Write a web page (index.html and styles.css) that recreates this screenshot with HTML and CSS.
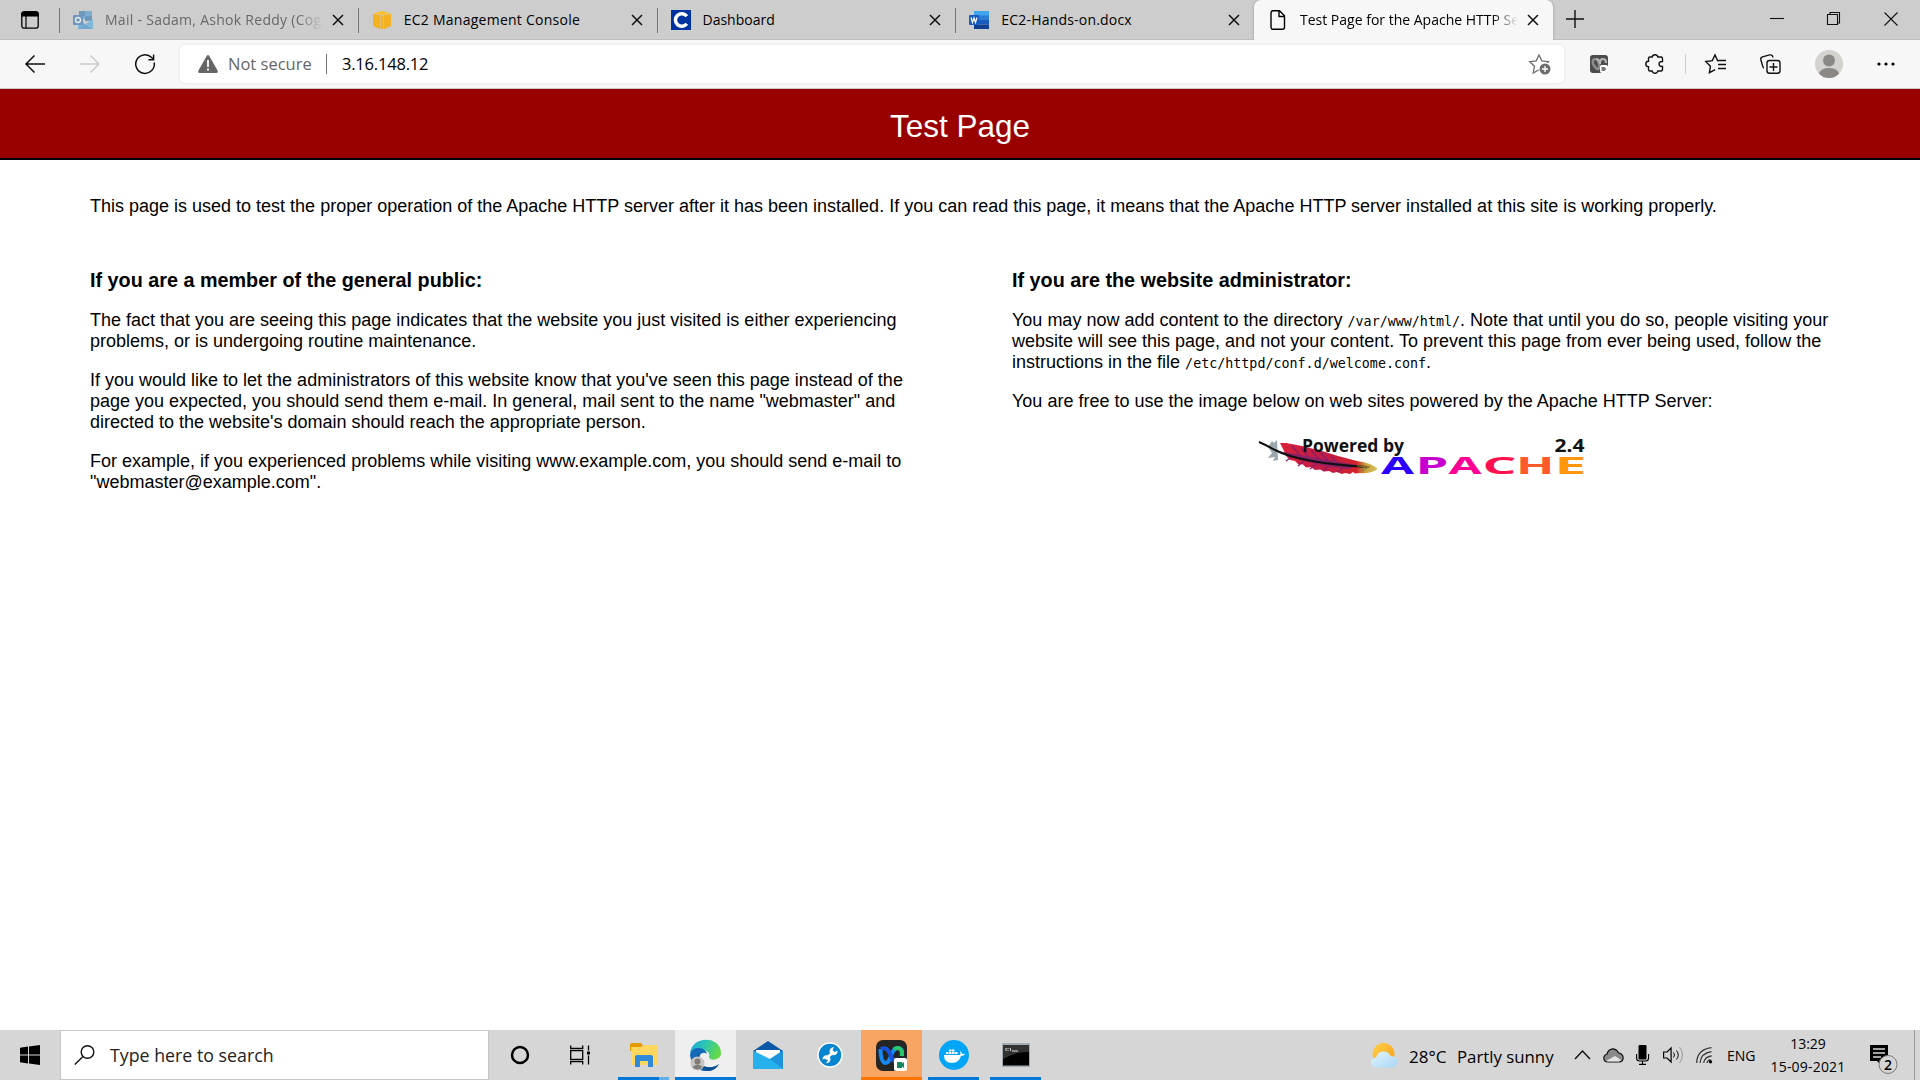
FILE: index.html
```
<!DOCTYPE html>
<html lang="en">
<head>
<meta charset="utf-8">
<title>Test Page for the Apache HTTP Server</title>
<link rel="stylesheet" href="styles.css">
</head>
<body>
<div class="screen">
  <div class="tabstrip">
    <div class="tab-actions">
      <svg width="18" height="18" viewBox="0 0 18 18"><rect x=".8" y=".8" width="16.4" height="16.4" rx="2.5" fill="none" stroke="#000" stroke-width="1.3"/><path d="M.8 5V3Q.8.8 3 .8h12Q17.2.8 17.2 3v2zM5 5v12" stroke="#000" stroke-width="1.2"/></svg>
    </div>
    <div class="tab">
      <svg class="dim" width="20" height="18" viewBox="0 0 20 18"><path d="M6 0h13v8H6z" fill="#2b8fd9"/><path d="M6 0h6v5H6zM12 5h7v5h-7z" fill="#1267ad"/><path d="M5 9l7.5 4L20 8v10H5z" fill="#35a7e8"/><path d="M11 13l9 5H5z" fill="#1b83cf"/><rect y="4" width="10" height="10" rx="1" fill="#0f62b3"/><circle cx="5" cy="9" r="2.5" fill="none" stroke="#fff" stroke-width="1.5"/></svg>
      <span class="tab-title muted t-mail">Mail - Sadam, Ashok Reddy (Cog</span>
      <svg class="x" width="12" height="12" viewBox="0 0 12 12"><path d="M1 1l10 10M11 1L1 11"/></svg>
    </div>
    <div class="tab">
      <svg width="20" height="18" viewBox="0 0 20 18"><path d="M1 3l7 1v14l-7-3zM12 4l7-1v12l-7 3zM8.500 4.500h3V18h-3z" fill="#f4b223"/><path d="M1 2.500L10 0l9 2.500L10 4z" fill="#fbc02d"/></svg>
      <span class="tab-title t-ec2">EC2 Management Console</span>
      <svg class="x" width="12" height="12" viewBox="0 0 12 12"><path d="M1 1l10 10M11 1L1 11"/></svg>
    </div>
    <div class="tab">
      <svg width="20" height="20" viewBox="0 0 20 20"><path d="M0 0h20v20H0z" fill="#0033a1"/><path d="M15.800 6.200A6.300 6.300 0 1 0 15.800 13.800" fill="none" stroke="#fff" stroke-width="3.500"/></svg>
      <span class="tab-title t-dash">Dashboard</span>
      <svg class="x" width="12" height="12" viewBox="0 0 12 12"><path d="M1 1l10 10M11 1L1 11"/></svg>
    </div>
    <div class="tab">
      <svg width="20" height="18" viewBox="0 0 20 18"><path d="M5 0h15v5H5z" fill="#41a5ee"/><path d="M5 4.500h15V9H5z" fill="#2b7cd3"/><path d="M5 9h15v4.500H5z" fill="#185abd"/><path d="M5 13.500h15V18H5z" fill="#103f91"/><rect y="4" width="10" height="10" rx="1" fill="#185abd"/><path d="M2 6.500l1.500 5L5 7l1.500 4.500 1.500-5" fill="none" stroke="#fff" stroke-width="1.200"/></svg>
      <span class="tab-title t-doc">EC2-Hands-on.docx</span>
      <svg class="x" width="12" height="12" viewBox="0 0 12 12"><path d="M1 1l10 10M11 1L1 11"/></svg>
    </div>
    <div class="tab active">
      <svg width="20" height="20" viewBox="0 0 20 20"><path d="M5 .8h6.500l5 5V17q0 2.200-2 2.200H5q-2 0-2-2.200V3Q3 .8 5 .8zM11 1v5.500h5.500" fill="none" stroke="#000" stroke-width="1.400"/></svg>
      <span class="tab-title t-test">Test Page for the Apache HTTP Se</span>
      <svg class="x" width="12" height="12" viewBox="0 0 12 12"><path d="M1 1l10 10M11 1L1 11"/></svg>
    </div>
    <svg class="new-tab" width="18" height="18" viewBox="0 0 18 18"><path d="M9 0v18M0 9h18" stroke="#111" stroke-width="1.400"/></svg>
    <div class="window-buttons">
      <svg width="14" height="14" viewBox="0 0 14 14"><path d="M0 6.500h14"/></svg>
      <svg width="14" height="14" viewBox="0 0 14 14"><path d="M.5 2.500h10v10H.5zM3 2V.5h9.500V11H11"/></svg>
      <svg width="14" height="14" viewBox="0 0 14 14"><path d="M.5.500l13 13M13.500.500l-13 13"/></svg>
    </div>
  </div>

  <div class="toolbar">
    <svg class="nav" width="20" height="18" viewBox="0 0 20 18"><path d="M9.500.500L1 9l8.500 8.500M1 9h19"/></svg>
    <svg class="nav off" width="20" height="18" viewBox="0 0 20 18"><path d="M10.500.500L19 9l-8.500 8.500M19 9H0"/></svg>
    <svg class="nav" width="20" height="20" viewBox="0 0 20 20"><path d="M19.200 8.500A9.300 9.300 0 1 1 16.600 3.500L18.500 5.300M18.600.500v5.200h-5.200"/></svg>
    <div class="address">
      <svg width="20" height="18" viewBox="0 0 20 18"><path d="M8.800.8Q10-.7 11.200.8L19.800 16q.5 2-1.300 2h-17Q-.3 18 .2 16z" fill="#666"/><path d="M10 5v7M10 13.500v2" stroke="#fff" stroke-width="1.800"/></svg>
      <span class="not-secure">Not secure</span>
      <span class="address-line"></span>
      <span class="url">3.16.148.12</span>
      <svg class="fav" width="22" height="21" viewBox="0 0 22 21"><path d="M10 1l2.800 5.900 6.700.8-4.900 4.600 1.200 6.700-5.800-3.300L4.200 19l1.300-6.700L.7 7.700l6.500-.8z" fill="none" stroke="#6d6d6d" stroke-width="1.300"/><circle cx="16" cy="15" r="6.500" fill="#fff"/><circle cx="16" cy="15" r="5.500" fill="#6d6d6d"/><path d="M16 12v6M13 15h6" stroke="#fff" stroke-width="1.300"/></svg>
    </div>
    <div class="tools">
      <svg width="18" height="18" viewBox="0 0 18 18"><rect width="18" height="18" rx="3" fill="#4c4c4c"/><path d="M3 9Q2 4 5 4t4 5-1 5-5-5" fill="none" stroke="#8d8d8d" stroke-width="2.500"/><path d="M6 4q4 0 4 5M10 8q0-4 3-4t3 4" fill="none" stroke="#b5b5b5" stroke-width="2.200"/><rect x="10" y="10" width="8" height="8" rx="2" fill="#fff"/><path d="M11.500 12h3l2 2-2 2h-3z" fill="#777"/></svg>
      <svg width="19" height="20" viewBox="0 0 19 20"><path d="M5 3h2.200Q7.500.8 10 .8T12.800 3H16q1.500 0 1.500 1.500V7.600Q14 7.300 14 10t3.500 2.400v3.100Q17.500 17 16 17h-3.200q-.3 2.200-2.800 2.200T7.200 17H5q-1.500 0-1.500-1.500v-2.800Q.8 12.500.8 10t2.700-2.700V4.500Q3.500 3 5 3z" fill="none" stroke="#111" stroke-width="1.400"/></svg>
      <span class="tool-line"></span>
      <svg width="21" height="20" viewBox="0 0 21 20"><path d="M14 6.700l-1.500-.1L10 1 7.300 6.600.8 7.500l4.600 4.700-1 6.500 5.800-3M14 6.500h7M13 10.500h8M13 14.500h8" fill="none" stroke="#111" stroke-width="1.400"/></svg>
      <svg width="21" height="20" viewBox="0 0 21 20"><rect x="7" y="6.500" width="13" height="12.700" rx="2.500" fill="none" stroke="#111" stroke-width="1.400"/><path d="M13.500 9v8M9.500 13h8M4 14Q3.200 14 2.500 11.500L.8 5.500Q.4 3.500 2.500 2.800L9.500.900Q12.500.400 13 3.500" fill="none" stroke="#111" stroke-width="1.400"/></svg>
      <svg width="28" height="28" viewBox="0 0 28 28"><circle cx="14" cy="14" r="14" fill="#d4d2cf"/><circle cx="14" cy="10.500" r="6" fill="#8b8784"/><path d="M4 23.500Q6 18 14 18t10 5.500Q20 28 14 28T4 23.500z" fill="#8b8784"/></svg>
      <svg width="18" height="4" viewBox="0 0 18 4"><circle cx="2" cy="2" r="1.600"/><circle cx="9" cy="2" r="1.600"/><circle cx="16" cy="2" r="1.600"/></svg>
    </div>
  </div>

  <header class="banner"><h1>Test Page</h1></header>

  <main class="page">
    <p class="intro">This page is used to test the proper operation of the Apache HTTP server after it has been installed. If you can read this page, it means that the Apache HTTP server installed at this site is working properly.</p>
    <div class="columns">
      <section>
        <h2>If you are a member of the general public:</h2>
        <p>The fact that you are seeing this page indicates that the website you just visited is either experiencing problems, or is undergoing routine maintenance.</p>
        <p>If you would like to let the administrators of this website know that you've seen this page instead of the page you expected, you should send them e-mail. In general, mail sent to the name "webmaster" and directed to the website's domain should reach the appropriate person.</p>
        <p>For example, if you experienced problems while visiting www.example.com, you should send e-mail to "webmaster@example.com".</p>
      </section>
      <section>
        <h2>If you are the website administrator:</h2>
        <p>You may now add content to the directory <code>/var/www/html/</code>. Note that until you do so, people visiting your website will see this page, and not your content. To prevent this page from ever being used, follow the instructions in the file <code>/etc/httpd/conf.d/welcome.conf</code>.</p>
        <p>You are free to use the image below on web sites powered by the Apache HTTP Server:</p>
        <svg class="powered" width="332" height="46" viewBox="0 0 332 46">
          <defs>
            <linearGradient id="plume" x1="0" y1="0" x2="1" y2="0"><stop offset="0" stop-color="#dc2038"/><stop offset=".45" stop-color="#c01c48"/><stop offset=".78" stop-color="#d3232b"/><stop offset=".87" stop-color="#c9a23c"/><stop offset="1" stop-color="#d6c75e"/></linearGradient>
          </defs>
          <path d="M12 13l4-6 2 2 3-3 1 20-5 1 2-4-7 1 4-5z" fill="#9aa7ad"/>
          <path d="M24 9l6 0 16 3 20 5 16 5 19 5q15 2 21 8-7 5-18 4l-5 .5-2-1.500-3 2-5-1-3 1-5-2-4 1-4-2-5 .5-4-2-5 .5-4-3-5 .5-3-3-5-.5-3-3-5-1-4-4-2-5z" fill="url(#plume)"/>
          <path d="M23 17q16 3 32 6 22 4 46 8l-8 4q-30-3-50-10-15-3-20-8z" fill="#6b2480" opacity=".65"/>
          <path d="M36 12l9 11M45 14l10 12M55 16l10 12M65 19l9 10M75 22l8 9M30 27l7-5M42 32l7-6M54 35l7-6M67 37l7-6M81 38l7-5" stroke="#8c1d69" stroke-width="1.300"/>
          <path d="M3 8Q12 12 19 16 44 29 111 33" fill="none" stroke="#111" stroke-width="2"/>
          <path d="M101 32l13 1M103 35l8-2M106 37l7-4" stroke="#8a7430"/>
          <g class="powered-caption"><text x="46" y="17.500" textLength="102" lengthAdjust="spacingAndGlyphs">Powered by</text><text x="298.500" y="17.500" textLength="30" lengthAdjust="spacingAndGlyphs">2.4</text></g>
          <g class="powered-name">
            <text x="125" y="40.300" textLength="33" lengthAdjust="spacingAndGlyphs" fill="#2b00ff">A</text>
            <text x="159.500" y="40.300" textLength="33" lengthAdjust="spacingAndGlyphs" fill="#c800cf">P</text>
            <text x="192.500" y="40.300" textLength="33" lengthAdjust="spacingAndGlyphs" fill="#ff0096">A</text>
            <text x="226.500" y="40.300" textLength="34" lengthAdjust="spacingAndGlyphs" fill="#ff104f">C</text>
            <text x="260" y="40.300" textLength="38.500" lengthAdjust="spacingAndGlyphs" fill="#ff5a2c">H</text>
            <text x="298.500" y="40.300" textLength="32" lengthAdjust="spacingAndGlyphs" fill="#ff960c">E</text>
          </g>
        </svg>
      </section>
    </div>
  </main>

  <footer class="taskbar">
    <div class="start"><svg width="20" height="20" viewBox="0 0 20 20"><path d="M0 2.800L8 1.600V9.500H0zM9 1.400L20 0v9.500H9zM0 10.500h8v7.900L0 17.300zM9 10.500h11V20L9 18.600z"/></svg></div>
    <div class="search">
      <svg width="21" height="20" viewBox="0 0 21 20"><circle cx="13.500" cy="7" r="6.300" fill="none" stroke="#111" stroke-width="1.400"/><path d="M9 11.500L.8 19.500" stroke="#111" stroke-width="1.400"/></svg>
      <span class="search-text">Type here to search</span>
    </div>
    <div class="apps">
      <div class="app"><svg width="20" height="20" viewBox="0 0 20 20"><circle cx="10" cy="10" r="8" fill="none" stroke="#000" stroke-width="2.500"/></svg></div>
      <div class="app view"><svg width="20" height="20" viewBox="0 0 20 20"><path d="M.7.500v3h12v-3M.7 5.700h12v8.600H.7zM.7 19.500v-3h12v3M18.500.500v5M18.500 10.500v9" fill="none" stroke="#000" stroke-width="1.300"/><path d="M17 6.500h3v3h-3z"/></svg></div>
      <div class="app run stacked"><svg width="28" height="24" viewBox="0 0 28 24"><path d="M0 2q0-2 2-2h9l2 3v5H0z" fill="#e09a00"/><path d="M1 4h10l3-2h13v20H1z" fill="#ffd75e"/><path d="M5 24V14q0-2 2-2h14q2 0 2 2v10h-5v-6h-8v6z" fill="#2f8bd9"/></svg></div>
      <div class="app current"><svg width="31" height="31" viewBox="0 0 31 31"><defs><linearGradient id="wave" x1="0" y1="0" x2="1" y2=".3"><stop offset="0" stop-color="#1aa6dc"/><stop offset=".5" stop-color="#2bc4b5"/><stop offset="1" stop-color="#62d94d"/></linearGradient></defs><path d="M0 15C0-5 31-5 31 13c0 8-12 8-12 4 2-5-4-8-9-5-5-3-10 0-10 3z" fill="url(#wave)"/><path d="M0 15q1-6 7-7 8-1 10 6-4-3-7 1-3 10 7 12 7 1 12-3-5 8-15 7Q2 29 0 15z" fill="#1469b8"/><path d="M9 14q-3 12 8 13 7 1 12-3-3 6-10 7-12-1-13-10 0-5 3-7z" fill="#0d4f93"/><circle cx="7.500" cy="23.500" r="7" fill="#c7c5c3"/><circle cx="7.500" cy="21.500" r="3" fill="#807c79"/><path d="M2.500 27q5-5 10 0-5 5-10 0z" fill="#807c79"/></svg></div>
      <div class="app"><svg width="30" height="28" viewBox="0 0 30 28"><path d="M0 10L15 0l15 10v5H0z" fill="#0b58a8"/><path d="M3 9h24v9H3z" fill="#fff"/><path d="M30 9.500V28H0V9.500L17 18z" fill="#27b1ec"/><path d="M30 28L17 18 30 9.500z" fill="#1e93dc"/></svg></div>
      <div class="app"><svg width="26" height="26" viewBox="0 0 26 26"><circle cx="13" cy="13" r="12" fill="#0785d1" stroke="#fff" stroke-width="1.500"/><path d="M8.500 17l8.500-7.500" stroke="#fff" stroke-width="3"/><path d="M20.500 8.500a4 4 0 1 1-3.500-3.200l-1.500 3 2 2zM5.500 17.500a4 4 0 1 1 3.500 3.700l2-3-2-2z" fill="#fff"/></svg></div>
      <div class="app meeting"><svg width="31" height="31" viewBox="0 0 31 31"><rect width="31" height="31" rx="7" fill="#252525"/><path d="M4.500 9q0 13 5 14c6 0 5-15 12-15q6 0 4 8" fill="none" stroke="#1588f2" stroke-width="4"/><path d="M5 9q6-3 9 5t7 8" fill="none" stroke="#1953dc" stroke-width="4"/><path d="M18 9.500q5-4 8 2V16" fill="none" stroke="#28c76c" stroke-width="4"/><rect x="18" y="18" width="13" height="13" rx="2" fill="#fff"/><path d="M21 22h5v1.500l2-1.500v6l-2-1.500V28h-5z" fill="#11875b"/></svg></div>
      <div class="app run"><svg width="30" height="30" viewBox="0 0 30 30"><circle cx="15" cy="15" r="15" fill="#03a6f7"/><path d="M5 15h16q1-2 0-4 2 1 2 3 2-.5 3 0-1 2-4 2-2 7-9 7-8 0-8-8z" fill="#fff"/><path d="M7 12h2.500v2H7zM10 12h2.500v2H10zM13 12h2.500v2H13zM16 12h2.500v2H16zM10 9.500h2.500v2H10zM13 9.500h2.500v2H13z" fill="#fff"/></svg></div>
      <div class="app run"><svg width="28" height="24" viewBox="0 0 28 24"><path d="M0 0h28v24H0z" fill="#a3abb2"/><path d="M1 2h26v20.500H1z" fill="#000"/><path d="M1 2h26v7Q12 9 1 16z" fill="#323232"/><path d="M4 5v3M6 5v1M6 7v1M8 5l1 3M10 8h6" stroke="#ddd"/></svg></div>
    </div>
    <div class="tray">
      <svg class="weather-icon" width="27" height="25" viewBox="0 0 27 25"><defs><linearGradient id="haze" x1="0" y1="0" x2="1" y2="1"><stop offset="0" stop-color="#e3f5ff"/><stop offset="1" stop-color="#a9d6f5"/></linearGradient><linearGradient id="sun" x1="0" y1="0" x2="1" y2="1"><stop offset="0" stop-color="#ffd34d"/><stop offset="1" stop-color="#f79a12"/></linearGradient></defs><circle cx="12.500" cy="11" r="11" fill="url(#sun)"/><path d="M6 24.500q-6-.5-6-5t5-5Q7 8 13 8.500q5 0 6.500 4.500 7 0 7 6 0 5-6 5.500z" fill="url(#haze)"/></svg>
      <span class="weather-temp">28°C</span><span class="weather-text">Partly sunny</span>
      <svg class="chevron" width="17" height="10" viewBox="0 0 17 10"><path d="M1 9l7.500-8L16 9" fill="none" stroke="#111" stroke-width="1.400"/></svg>
      <svg class="cloud" width="21" height="15" viewBox="0 0 21 15"><path d="M5 14q-4 0-4.200-4Q1 7 4 6q1-4.500 5.500-5.200 4 0 6 4 4.500 1 4.700 5-.2 4-4.200 4.200z" fill="#8b8b8b" stroke="#111" stroke-width="1.200"/><path d="M3 13l9-5 6 4-2 1.500H5z" fill="#e4e4e4"/></svg>
      <svg class="mic" width="13" height="20" viewBox="0 0 13 20"><rect x="2.500" width="8" height="14.500" rx="1"/><path d="M.6 9v4q0 3 3 3h6q3 0 3-3V9M6.500 16v3M3 19.400h7" fill="none" stroke="#000" stroke-width="1.100"/></svg>
      <svg class="speaker" width="21" height="18" viewBox="0 0 21 18"><path d="M.6 6h3.500l4-4v14l-4-4H.6z" fill="none" stroke="#000" stroke-width="1.200"/><path d="M10.500 6.500q2 2.500 0 5M13.500 4.500q3.500 4.500 0 9" fill="none" stroke="#111"/><path d="M16.500 1q6 8 0 16" fill="none" stroke="#999"/></svg>
      <svg class="wifi" width="17" height="17" viewBox="0 0 17 17"><path d="M.7 16Q1 2.500 15.500.7M4 16Q5 6 15.500 4.700M7.700 16q1-6.500 8-7.200M11 16q.5-2.800 3.500-3.500" fill="none" stroke="#333" stroke-width="1.200"/><circle cx="14.500" cy="14.800" r="1.700"/></svg>
      <span class="lang">ENG</span>
      <div class="clock"><span class="time">13:29</span><span class="date">15-09-2021</span></div>
      <svg class="notice" width="28" height="32" viewBox="0 0 28 32"><path d="M0 1h18v16h-7v4l-4-4H0z"/><path d="M3 5h12M3 9h12M3 13h8" stroke="#d6d6d6" stroke-width="1.300"/><circle cx="18" cy="20.500" r="9" fill="#d6d6d6" stroke="#777"/><text x="18" y="25.500" text-anchor="middle">2</text></svg>
      <span class="desktop-edge"></span>
    </div>
  </footer>
</div>
</body>
</html>
```
FILE: styles.css
```
* { box-sizing: border-box; }
body { margin: 0; background: #fff; color: #000; font-family: "Open Sans", sans-serif; }
svg { display: block; flex: none; overflow: visible; }
.screen { width: 1920px; height: 1080px; display: flex; flex-direction: column; overflow: hidden; }

.tabstrip { height: 40px; background: #cdcdcd; display: flex; align-items: stretch; flex: none; box-shadow: inset 0 -1px #bcbcbc; }
.tab-actions { width: 59px; padding: 11px 0 0 21px; }
.tab { width: 298.750px; display: flex; align-items: center; padding: 0 14px; position: relative; background: linear-gradient(#777, #777) 0 8px / 1px 25px no-repeat; }
.tab-title { width: 218px; margin-left: 12px; font-size: 14px; line-height: 38px; white-space: nowrap; overflow: hidden; flex: none; }
.tab .x { margin-left: auto; }
.x { stroke: #111; stroke-width: 1.5; fill: none; }
.dim { opacity: .5; }
.muted { color: #686868; }
.t-ec2 { letter-spacing: .25px; }
.t-doc { letter-spacing: .2px; }
.t-mail { letter-spacing: .28px; }
.t-mail, .t-test { -webkit-mask-image: linear-gradient(90deg, #000 88%, transparent); mask-image: linear-gradient(90deg, #000 88%, transparent); }
.active { background: #f7f7f7; border-radius: 7px 7px 0 0; box-shadow: 0 0 3px #999; clip-path: inset(0 -4px 0 -4px); }
.new-tab { margin: 10px 0 0 13px; }
.window-buttons { margin: 12px 22px 0 auto; display: flex; gap: 43px; }
.window-buttons path { fill: none; stroke: #111; stroke-width: 1.1; }

.toolbar { height: 49px; background: #f7f7f7; border-bottom: 1px solid #c9c9c9; display: flex; align-items: center; flex: none; padding-left: 25px; gap: 35px; }
.nav { fill: none; stroke: #111; stroke-width: 1.5; }
.nav.off { stroke: #ccc; }
.address { width: 1384px; height: 38px; margin-left: -10px; background: #fff; border-radius: 5px; box-shadow: 0 0 3px #e2e2e2; display: flex; align-items: center; padding: 0 13px 0 18px; }
.not-secure { width: 85px; margin-left: 10px; padding-bottom: 2px; color: #666; font-size: 16.5px; white-space: nowrap; }
.address-line { width: 1px; height: 20px; margin-left: 13px; background: #777; }
.url { margin-left: 15px; padding-bottom: 2px; font-size: 16.5px; letter-spacing: -.2px; }
.fav { margin-left: auto; }
.tools { display: flex; align-items: center; margin-left: -9px; gap: 0; }
.tools svg:nth-child(1) { margin-right: 37px; }
.tools svg:nth-child(2) { margin-right: 21px; }
.tool-line { width: 1px; height: 20px; background: #ccc; margin-right: 19px; }
.tools svg:nth-child(4) { margin-right: 34px; }
.tools svg:nth-child(5) { margin-right: 34px; }
.tools svg:nth-child(6) { margin-right: 34px; }

.banner { height: 71px; background: #900; border-bottom: 2px solid #000; flex: none; }
.banner h1 { margin: 0; padding-top: 1px; color: #fff; text-align: center; font: 31.5px/72px "Liberation Sans", Arial, sans-serif; }
.page { flex: 1; padding: 36px 90px 0; font: 18px/21px "Liberation Sans", Arial, sans-serif; }
.intro { margin: 0; white-space: nowrap; }
.columns { display: grid; grid-template-columns: 818px 818px; column-gap: 104px; margin-top: 52px; }
.columns h2 { margin: 0 0 18px; font-size: 19.800px; line-height: 23px; }
.columns p { margin: 0 0 18px; }
.columns code { font: 13.350px/1 "DejaVu Sans Mono", monospace; }
.powered { margin: 22px auto 0; position: relative; left: 1px; }
.powered-caption { font: bold 17px "Open Sans", sans-serif; fill: #111; }
.powered-name { font: 700 22.500px "Open Sans", sans-serif; }

.taskbar { height: 50px; background: #d6d6d6; display: flex; flex: none; }
.start { width: 60px; padding: 15px 0 0 20px; }
.search { width: 429px; background: #fff; border: 1px solid #c7c7c7; display: flex; align-items: center; padding-left: 13px; }
.search-text { margin-left: 15px; font-size: 17.800px; color: #222; white-space: nowrap; }
.apps { display: flex; gap: 1px; }
.app { width: 61px; display: flex; align-items: center; justify-content: center; }
.view { padding-right: 4px; }
.run { background: linear-gradient(#0078d7, #0078d7) 5px 47px / 51px 3px no-repeat; }
.stacked { background: linear-gradient(90deg, #0078d7 41px, #62aee8 41px) 5px 47px / 51px 3px no-repeat; }
.current { background: #efefef; box-shadow: inset 0 -3px #0078d7; }
.meeting { background: #f8a462; box-shadow: inset 0 -3px #ff7500; }
.tray { margin-left: auto; display: flex; align-items: center; white-space: nowrap; }
.weather-temp { width: 48px; margin-left: 11px; padding-top: 2px; font-size: 17px; }
.weather-text { width: 96px; padding-top: 2px; font-size: 16.800px; }
.chevron { margin-left: 21px; }
.cloud { margin-left: 12px; }
.mic { margin-left: 12px; }
.speaker { margin-left: 14px; }
.wifi { margin-left: 12px; }
.lang { width: 29px; margin-left: 14px; font-size: 14px; }
.clock { width: 76px; margin-left: 14px; display: flex; flex-direction: column; align-items: center; font-size: 14px; line-height: 23px; padding-bottom: 1px; }
.date { letter-spacing: .2px; }
.notice { margin: 10px 0 0 24px; }
.notice text { font: 600 14px "Open Sans", sans-serif; }
.desktop-edge { width: 6px; height: 50px; margin-left: 16px; border-left: 1px solid #999; }
```
